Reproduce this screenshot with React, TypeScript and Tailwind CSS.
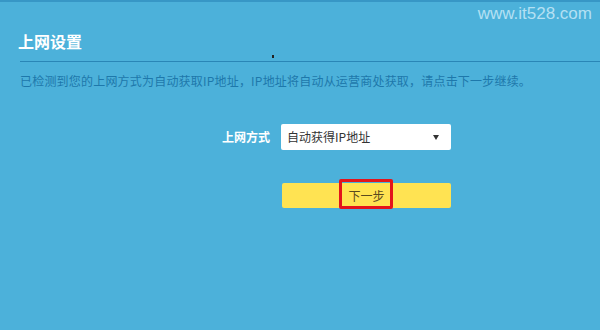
import React from "react";

const cjk = "font-['Microsoft_YaHei','Noto_Sans_CJK_SC',sans-serif]";

export default function App() {
  return (
    <div
      className={`relative w-[600px] h-[330px] overflow-hidden bg-[#4cb1da] border-t-[2px] border-[#3797c6] ${cjk}`}
    >
      {/* watermark */}
      <div className="flex justify-end pr-[8px] pt-[2px] text-[17px] leading-[20px] text-[#b4e0f3] font-['Liberation_Sans',sans-serif]">
        www.it528.com
      </div>

      {/* stray cursor dot */}
      <span className="absolute left-[272px] top-[53px] w-[2px] h-[3px] bg-[#222]" />

      {/* ===== TITLE ===== */}
      <h1 className="pl-[18px] mt-[7px] text-[16px] leading-[20px] font-bold text-white">
        上网设置
      </h1>
      <div className="ml-[20px] mt-[10px] h-px bg-[#2a86b6]" />

      <p className="ml-[20px] mt-[11px] text-[12px] leading-[16px] tracking-[0.2px] text-[#1e78ab]">
        已检测到您的上网方式为自动获取IP地址，IP地址将自动从运营商处获取，请点击下一步继续。
      </p>

      {/* ===== FORM ===== */}
      <div className="flex items-center gap-[11px] pl-[222px] mt-[35px]">
        <span className="text-[12px] font-bold text-white leading-[16px]">
          上网方式
        </span>
        <div className="flex items-center justify-between w-[170px] h-[26px] bg-white rounded-[2px] pl-[6px] pr-[12px]">
          <span className="text-[12px] text-[#333]">自动获得IP地址</span>
          <span className="w-0 h-0 border-x-[3px] border-x-transparent border-t-[5px] border-t-[#333]" />
        </div>
      </div>

      <div className="ml-[282px] mt-[33px] relative w-[169px] h-[25px] bg-[#ffe352] rounded-[2px] flex items-center justify-center">
        <span className="text-[12px] text-[#5a4a1e]">下一步</span>
        <span className="absolute left-[57px] top-[-4px] w-[54px] h-[30px] border-[3px] border-[#e3141b] rounded-[2px]" />
      </div>
    </div>
  );
}
